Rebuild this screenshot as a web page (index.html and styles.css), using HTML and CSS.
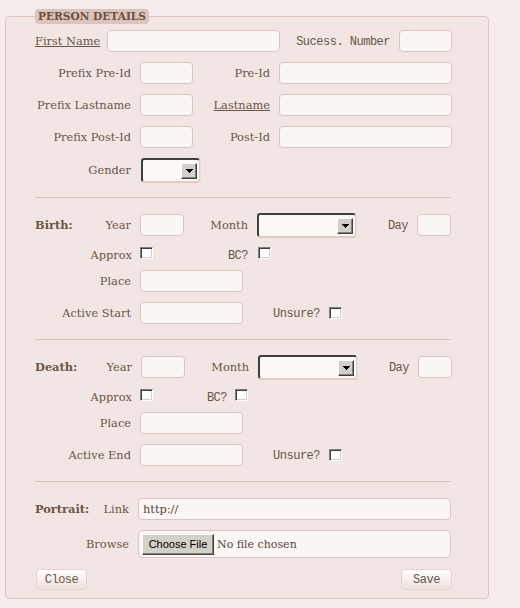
FILE: index.html
```html
<!DOCTYPE html>
<html>
<head>
<meta charset="utf-8">
<link rel="stylesheet" href="styles.css">
</head>
<body>
<form class="person">
  <fieldset class="box">
    <legend class="legend">PERSON DETAILS</legend>

    <div class="group">
      <div class="row">
        <label class="cell c72 u">First Name</label>
        <input class="inp i173" type="text">
        <label class="cell c119 ra mono">Sucess. Number</label>
        <input class="inp i53" type="text">
      </div>
      <div class="row">
        <label class="cell c105 ra">Prefix Pre-Id</label>
        <input class="inp i53" type="text">
        <label class="cell c86 ra">Pre-Id</label>
        <input class="inp i173" type="text">
      </div>
      <div class="row">
        <label class="cell c105 ra">Prefix Lastname</label>
        <input class="inp i53" type="text">
        <label class="cell c86 ra u">Lastname</label>
        <input class="inp i173" type="text">
      </div>
      <div class="row">
        <label class="cell c105 ra">Prefix Post-Id</label>
        <input class="inp i53" type="text">
        <label class="cell c86 ra">Post-Id</label>
        <input class="inp i173" type="text">
      </div>
      <div class="row row-sel">
        <label class="cell c105 ra">Gender</label>
        <div class="select s-gender">
          <span class="sel-btn"><svg width="7" height="4" viewBox="0 0 7 4"><path d="M0 0h7v1H6v1H5v1H4v1H3V3H2V2H1V1H0z" fill="#000"/></svg></span>
        </div>
      </div>
    </div>

    <hr class="rule">

    <div class="group">
      <div class="row">
        <div class="cell c105 split"><span class="head">Birth:</span><label>Year</label></div>
        <input class="inp i44" type="text">
        <label class="cell c73 ra">Month</label>
        <div class="select s-month">
          <span class="sel-btn"><svg width="7" height="4" viewBox="0 0 7 4"><path d="M0 0h7v1H6v1H5v1H4v1H3V3H2V2H1V1H0z" fill="#000"/></svg></span>
        </div>
        <label class="cell c61 ra mono">Day</label>
        <input class="inp i34" type="text">
      </div>
      <div class="row row-chk">
        <label class="cell c105 ra pr8">Approx</label>
        <input class="chk ml2" type="checkbox">
        <label class="cell c105 ra pr10 mono">BC?</label>
        <input class="chk" type="checkbox">
      </div>
      <div class="row">
        <label class="cell c105 ra">Place</label>
        <input class="inp i103" type="text">
      </div>
      <div class="row">
        <label class="cell c105 ra">Active Start</label>
        <input class="inp i103" type="text">
        <label class="cell c86 ra mono">Unsure?</label>
        <input class="chk" type="checkbox">
      </div>
    </div>

    <hr class="rule">

    <div class="group">
      <div class="row">
        <div class="cell c106 split"><span class="head">Death:</span><label>Year</label></div>
        <input class="inp i44" type="text">
        <label class="cell c73 ra">Month</label>
        <div class="select s-month">
          <span class="sel-btn"><svg width="7" height="4" viewBox="0 0 7 4"><path d="M0 0h7v1H6v1H5v1H4v1H3V3H2V2H1V1H0z" fill="#000"/></svg></span>
        </div>
        <label class="cell c61 ra mono">Day</label>
        <input class="inp i34" type="text">
      </div>
      <div class="row row-chk">
        <label class="cell c105 ra pr8">Approx</label>
        <input class="chk ml2" type="checkbox">
        <label class="cell c82 ra pr8 mono">BC?</label>
        <input class="chk" type="checkbox">
      </div>
      <div class="row">
        <label class="cell c105 ra">Place</label>
        <input class="inp i103" type="text">
      </div>
      <div class="row">
        <label class="cell c105 ra">Active End</label>
        <input class="inp i103" type="text">
        <label class="cell c86 ra mono">Unsure?</label>
        <input class="chk" type="checkbox">
      </div>
    </div>

    <hr class="rule">

    <div class="group">
      <div class="row">
        <div class="cell c103 split"><span class="head">Portrait:</span><label>Link</label></div>
        <input class="inp i313" type="text" value="http://">
      </div>
      <div class="row row-file">
        <label class="cell c103 ra">Browse</label>
        <div class="file">
          <button class="choose" type="button">Choose File</button>
          <span class="nofile">No file chosen</span>
        </div>
      </div>
      <div class="actions">
        <button class="btn" type="button">Close</button>
        <button class="btn mono" type="button">Save</button>
      </div>
    </div>
  </fieldset>
</form>
</body>
</html>
```

FILE: styles.css
```css
* { box-sizing: border-box; }

body {
  margin: 0;
  background: #f6eceb;
  font-family: "DejaVu Serif", serif;
  font-size: 11.4px;
  color: #6b5548;
}

.person { margin: 0; }

.box {
  margin: 9px 0 0 5px;
  width: 484px;
  min-width: 0;
  padding: 6px 36px 8px 29px;
  border: 1px solid #dfc5be;
  border-radius: 4px;
  background: #f2e6e4;
}

.legend {
  padding: 0 3px;
  height: 15px;
  line-height: 15px;
  background: #dcc4bd;
  border-radius: 4px;
  font-weight: bold;
  font-size: 10.6px;
  color: #6b5043;
}

.group {
  display: flex;
  flex-direction: column;
  gap: 10px;
}

.row {
  display: flex;
  align-items: center;
  height: 22px;
}
.row-sel { height: 24px; }
.row-chk { height: 13px; align-items: flex-start; margin-top: 1px; }
.row-chk .cell { line-height: 16px; }
.row-file { height: 28px; }

.cell { flex: none; white-space: nowrap; }
.ra { text-align: right; padding-right: 9px; }
.pr8 { padding-right: 8px; }
.pr10 { padding-right: 10px; }
.split { display: flex; justify-content: space-between; padding-right: 9px; }
.head { font-weight: bold; }
.u { text-decoration: underline; }
.mono { font-family: "Liberation Mono", monospace; font-size: 12px; letter-spacing: -0.5px; }
.cell.mono { padding-top: 2px; }
.row-chk .cell.mono { padding-top: 1px; }
.ml2 { margin-left: 2px; }

.c61 { width: 61px; }
.c72 { width: 72px; }
.c73 { width: 73px; }
.c82 { width: 82px; }
.c86 { width: 86px; }
.c103 { width: 103px; }
.c105 { width: 105px; }
.c106 { width: 106px; }
.c119 { width: 119px; }

.inp {
  flex: none;
  height: 22px;
  margin: 0;
  padding: 0 4px;
  border: 1px solid #dec4bc;
  border-radius: 4px;
  background: #fbf7f5;
  font: 11.4px "DejaVu Serif", serif;
  color: #5a463b;
}
.i34 { width: 34px; }
.i44 { width: 44px; }
.i53 { width: 53px; }
.i103 { width: 103px; }
.i173 { width: 173px; }
.i313 { width: 313px; }

.select {
  flex: none;
  display: flex;
  justify-content: flex-end;
  align-items: center;
  height: 24px;
  padding-right: 2px;
  border: 1px solid #e3cdc6;
  border-top: 2px solid #3f3f3f;
  border-left: 2px solid #3f3f3f;
  border-radius: 3px;
  background: #fcf8f6;
  box-shadow: 0 1px 0 #e3cbc4, 1px 0 0 #eedcd7;
}
.s-gender { width: 59px; margin-left: 1px; }
.s-month { width: 99px; }

.sel-btn {
  display: flex;
  align-items: center;
  justify-content: center;
  width: 16px;
  height: 16px;
  background: #d4d0c8;
  border: 1px solid;
  border-color: #fff #404040 #404040 #fff;
  box-shadow: inset -1px -1px 0 #808080;
}

.chk {
  flex: none;
  appearance: none;
  -webkit-appearance: none;
  width: 13px;
  height: 12px;
  margin: 0;
  background: #fff;
  border: 1px solid;
  border-color: #808080 #fff #fff #808080;
  box-shadow: inset 1px 1px 0 #404040, inset -1px -1px 0 #d4d0c8;
}

.rule {
  width: 416px;
  margin: 15px 0 16px;
  border: 0;
  border-top: 1px solid #dcc1b9;
  height: 0;
}

.file {
  display: flex;
  align-items: center;
  gap: 3px;
  width: 313px;
  height: 28px;
  padding-left: 3px;
  border: 1px solid #dec4bc;
  border-radius: 4px;
  background: #fbf7f5;
}
.choose {
  width: 72px;
  height: 21px;
  margin: 0;
  padding: 0;
  background: #d4d0c8;
  border: 1px solid;
  border-color: #fff #404040 #404040 #fff;
  box-shadow: inset -1px -1px 0 #808080;
  font: 11px "Liberation Sans", Arial, sans-serif;
  color: #000;
}
.nofile { font-size: 11px; color: #5a463b; }

.actions {
  display: flex;
  justify-content: space-between;
  margin-top: 1px;
}
.btn {
  width: 51px;
  height: 21px;
  margin: 0 0 0 1px;
  padding: 0;
  border: 1px solid #e8d3cc;
  border-radius: 4px;
  background: linear-gradient(#ffffff, #f0e0db);
  font-family: "Liberation Mono", monospace;
  font-size: 12px;
  letter-spacing: -0.5px;
  color: #6b5548;
}
```
